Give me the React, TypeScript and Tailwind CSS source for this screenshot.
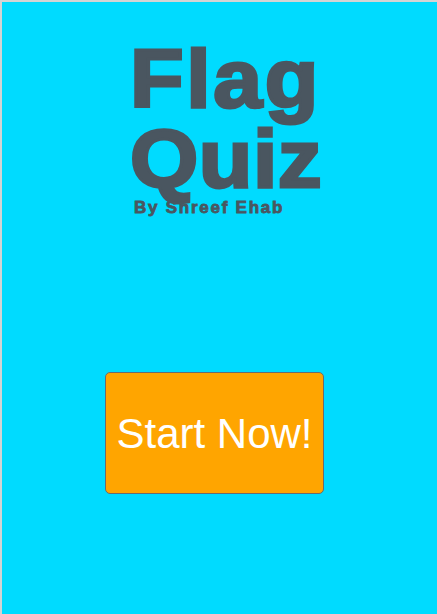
export default function App() {
  return (
    <div className="w-[437px] h-[614px] bg-[#00dbff] border-t-2 border-l-2 border-[#d4d4d4] flex flex-col overflow-hidden" style={{ fontFamily: '"Liberation Sans", Arial, sans-serif' }}>
      <div className="flex flex-col items-start pl-[128px] pt-[37px]">
        <h1 className="font-bold text-[#4a5660] text-[82px] leading-[80px] tracking-[2.5px] origin-left scale-x-[1.07] [-webkit-text-stroke:3px_#4a5660]">Flag</h1>
        <h1 className="font-bold text-[#4a5660] text-[82px] leading-[79px] tracking-[0.5px] origin-left scale-x-[1.07] [-webkit-text-stroke:3px_#4a5660]">Quiz</h1>
        <p className="font-bold text-[#4a5660] text-[17px] leading-[20px] tracking-[1.75px] pl-[4px] [-webkit-text-stroke:0.8px_#4a5660]">By Shreef Ehab</p>
      </div>
      <div className="pl-[103px] pt-[154px]">
        <button className="w-[219px] h-[122px] bg-[#ffa500] border border-[#6b6b6b] rounded-[5px] text-white text-[42px] flex items-center justify-center">
          Start Now!
        </button>
      </div>
    </div>
  );
}
